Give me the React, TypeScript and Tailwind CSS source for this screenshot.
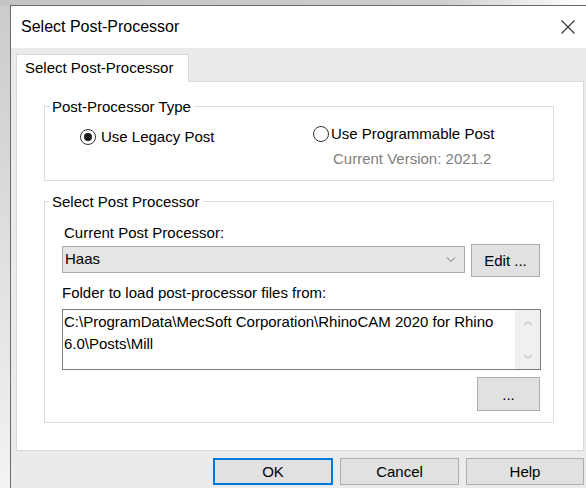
import React from "react";

type BtnProps = { label: string; className?: string; primary?: boolean };

function Radio({ checked }: { checked?: boolean }) {
  return (
    <span className="flex h-[16px] w-[16px] shrink-0 items-center justify-center rounded-full border border-[#333333] bg-white">
      {checked && <span className="h-[8px] w-[8px] rounded-full bg-[#1a1a1a]" />}
    </span>
  );
}

function Button({ label, className = "", primary }: BtnProps) {
  return (
    <button
      className={`flex items-center justify-center bg-[#e1e1e1] text-[15px] leading-none text-black ${
        primary ? "border-2 border-[#0078d7]" : "border border-[#adadad]"
      } ${className}`}
    >
      {label}
    </button>
  );
}

function Chevron({ up, color }: { up?: boolean; color: string }) {
  return (
    <svg width="10" height="6" viewBox="0 0 10 6" fill="none">
      <path
        d={up ? "M1 5.5 L5 1.5 L9 5.5" : "M1 0.5 L5 4.5 L9 0.5"}
        stroke={color}
        strokeWidth="1"
      />
    </svg>
  );
}

export default function App() {
  return (
    <div className="flex h-[488px] w-[586px] flex-col overflow-hidden bg-white font-['Liberation_Sans',Arial,sans-serif] text-[15px] text-black">
      <div className="h-[5px] shrink-0 bg-linear-to-r from-[#c4c4c4] via-[#cdcdcd] via-75% to-white" />
      <div className="flex flex-1">
        <div className="w-[10px] shrink-0 bg-linear-to-b from-[#cbcbcb] to-[#f3f3f3]" />

        {/* dialog window */}
        <div className="flex w-[580px] shrink-0 flex-col border-l border-t border-[#6a6a6a] bg-[#ebebeb]">
          <div className="flex h-[42px] shrink-0 items-center justify-between bg-white pl-[10px] pr-[15px]">
            <span className="text-[16px]">Select Post-Processor</span>
            <svg width="14" height="14" viewBox="0 0 14 14" fill="none">
              <path d="M0.5 0.5 L13.5 13.5 M13.5 0.5 L0.5 13.5" stroke="#333333" strokeWidth="1.1" />
            </svg>
          </div>

          <div className="flex flex-col px-[5px] pt-[6px]">
            <div className="flex">
              <div className="relative z-10 -mb-px flex h-[28px] w-[173px] items-center border border-b-0 border-[#d9d9d9] bg-white pl-[8px]">
                Select Post-Processor
              </div>
            </div>

            {/* tab page */}
            <div className="h-[370px] w-[568px] border border-[#d9d9d9] bg-white pl-[27px] pt-[16px]">
              <fieldset className="w-[510px] border border-[#dcdcdc] pb-[13px]">
                <legend className="ml-[4px] px-[3px] leading-[17px]">Post-Processor Type</legend>
                <div className="flex items-start pl-[35px]">
                  <label className="mt-[13px] flex w-[233px] items-center gap-[5px] leading-[17px]">
                    <Radio checked />
                    Use Legacy Post
                  </label>
                  <div className="mt-[10px] flex flex-col">
                    <label className="flex items-center gap-[2px] leading-[17px]">
                      <Radio />
                      Use Programmable Post
                    </label>
                    <span className="ml-[20px] mt-[8px] leading-[17px] text-[#808080]">
                      Current Version: 2021.2
                    </span>
                  </div>
                </div>
              </fieldset>

              <fieldset className="mt-[12px] w-[510px] border border-[#dcdcdc] pb-[11px]">
                <legend className="ml-[4px] px-[3px] leading-[17px]">Select Post Processor</legend>
                <div className="pl-[17px]">
                  <div className="ml-[2px] mt-[14px] leading-[17px]">Current Post Processor:</div>
                  <div className="mt-[3px] flex items-start gap-[6px]">
                    <div className="mt-[2px] flex h-[27px] w-[403px] items-center justify-between border border-[#acacac] bg-[#e5e5e5] pl-[2px] pr-[8px]">
                      <span>Haas</span>
                      <Chevron color="#6f6f6f" />
                    </div>
                    <Button label="Edit ..." className="h-[33px] w-[69px]" />
                  </div>
                  <div className="mt-[7px] leading-[17px]">Folder to load post-processor files from:</div>
                  <div className="mt-[8px] flex h-[61px] w-[479px] border border-[#7a7a7a] bg-white">
                    <div className="flex-1 pl-[1px] pt-[1px] leading-[22px]">
                      <div>C:\ProgramData\MecSoft Corporation\RhinoCAM 2020 for Rhino</div>
                      <div>6.0\Posts\Mill</div>
                    </div>
                    <div className="flex w-[25px] flex-col items-center justify-between bg-[#f0f0f0] pb-[9px] pt-[10px]">
                      <Chevron up color="#a6a6a6" />
                      <Chevron color="#a6a6a6" />
                    </div>
                  </div>
                  <div className="mt-[7px] flex w-[478px] justify-end">
                    <Button label="..." className="h-[34px] w-[63px]" />
                  </div>
                </div>
              </fieldset>
            </div>

            <div className="mt-[7px] flex w-[568px] justify-end gap-[7px]">
              <Button label="OK" primary className="h-[27px] w-[120px]" />
              <Button label="Cancel" className="h-[27px] w-[119px]" />
              <Button label="Help" className="h-[27px] w-[118px]" />
            </div>
          </div>
        </div>
      </div>
    </div>
  );
}
